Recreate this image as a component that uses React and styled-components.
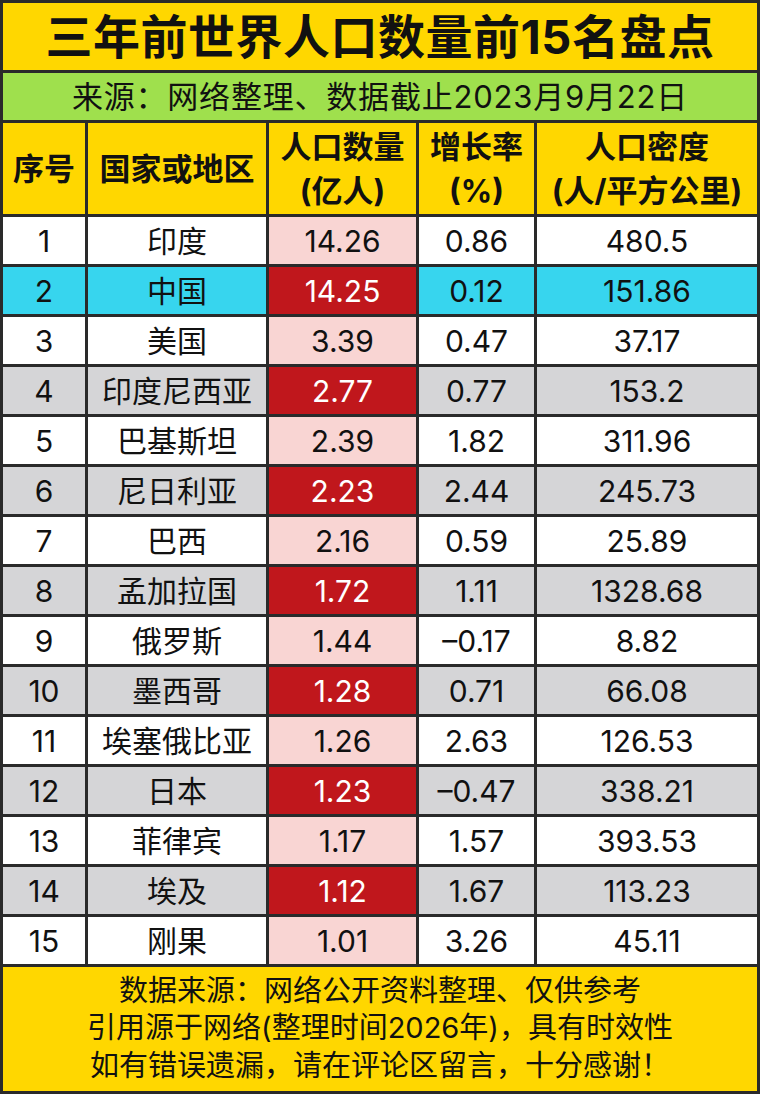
import React from "react";
import styled, { createGlobalStyle } from "styled-components";

const GlobalStyle = createGlobalStyle`
  html, body {
    margin: 0;
    padding: 0;
    background: #ffffff;
  }
  body {
    font-family: "Inter", "Noto Sans CJK SC", sans-serif;
  }
`;

const colors = {
  line: "#2a2a2a",
  yellow: "#ffd700",
  green: "#9fe04d",
  cyan: "#37d5ee",
  pink: "#f9d5d3",
  red: "#c0171c",
  grey: "#d5d5d7",
  white: "#ffffff",
};

const Sheet = styled.div`
  display: grid;
  grid-template-columns: 82px 178px 147px 115px 220px;
  grid-template-rows: 67px 47px 91px repeat(15, 47px) 124px;
  gap: 3px;
  padding: 3px;
  width: 760px;
  height: 1094px;
  box-sizing: border-box;
  background: ${colors.line};
`;

const Banner = styled.div`
  grid-column: 1 / -1;
  display: flex;
  align-items: center;
  justify-content: center;
  background: ${(p) => p.$bg};
  color: #111;
`;

const Title = styled.h1`
  margin: 0;
  font-family: "Inter", "Noto Sans CJK SC", sans-serif;
  font-size: 47px;
  font-weight: 700;
  letter-spacing: 0.5px;
  line-height: 1;
`;

const Subtitle = styled.div`
  font-size: 31px;
  line-height: 1;
  font-weight: 400;
  letter-spacing: 0.8px;
`;

const HeadCell = styled.div`
  background: ${colors.yellow};
  display: flex;
  flex-direction: column;
  align-items: center;
  justify-content: center;
  font-size: 31px;
  font-weight: 700;
  line-height: 44px;
  color: #111;
  white-space: nowrap;
`;

const toneBg = {
  white: colors.white,
  grey: colors.grey,
  cyan: colors.cyan,
  pink: colors.pink,
  red: colors.red,
};

const Cell = styled.div`
  background: ${(p) => toneBg[p.$tone]};
  color: ${(p) => (p.$tone === "red" ? "#ffffff" : "#111")};
  display: flex;
  align-items: center;
  justify-content: center;
  font-size: 30px;
  line-height: 1;
  white-space: nowrap;
`;

const Footer = styled(Banner)`
  flex-direction: column;
  font-size: 29px;
  line-height: 37.5px;
  padding-bottom: 2px;
`;

const rows = [
  [1, "印度", "14.26", "0.86", "480.5"],
  [2, "中国", "14.25", "0.12", "151.86"],
  [3, "美国", "3.39", "0.47", "37.17"],
  [4, "印度尼西亚", "2.77", "0.77", "153.2"],
  [5, "巴基斯坦", "2.39", "1.82", "311.96"],
  [6, "尼日利亚", "2.23", "2.44", "245.73"],
  [7, "巴西", "2.16", "0.59", "25.89"],
  [8, "孟加拉国", "1.72", "1.11", "1328.68"],
  [9, "俄罗斯", "1.44", "–0.17", "8.82"],
  [10, "墨西哥", "1.28", "0.71", "66.08"],
  [11, "埃塞俄比亚", "1.26", "2.63", "126.53"],
  [12, "日本", "1.23", "–0.47", "338.21"],
  [13, "菲律宾", "1.17", "1.57", "393.53"],
  [14, "埃及", "1.12", "1.67", "113.23"],
  [15, "刚果", "1.01", "3.26", "45.11"],
];

const rowTone = (rank) => {
  if (rank === 2) return "cyan";
  return rank % 2 === 0 ? "grey" : "white";
};

export default function App() {
  return (
    <>
      <GlobalStyle />
      <Sheet>
        <Banner $bg={colors.yellow}>
          <Title>三年前世界人口数量前15名盘点</Title>
        </Banner>
        <Banner $bg={colors.green}>
          <Subtitle>来源：网络整理、数据截止2023月9月22日</Subtitle>
        </Banner>

        <HeadCell>序号</HeadCell>
        <HeadCell>国家或地区</HeadCell>
        <HeadCell>
          <span>人口数量</span>
          <span>(亿人)</span>
        </HeadCell>
        <HeadCell>
          <span>增长率</span>
          <span>(%)</span>
        </HeadCell>
        <HeadCell>
          <span>人口密度</span>
          <span>(人/平方公里)</span>
        </HeadCell>

        {rows.map(([rank, name, pop, growth, density]) => {
          const tone = rowTone(rank);
          const popTone = rank % 2 === 0 ? "red" : "pink";
          return (
            <React.Fragment key={rank}>
              <Cell $tone={tone}>{rank}</Cell>
              <Cell $tone={tone}>{name}</Cell>
              <Cell $tone={popTone}>{pop}</Cell>
              <Cell $tone={tone}>{growth}</Cell>
              <Cell $tone={tone}>{density}</Cell>
            </React.Fragment>
          );
        })}

        <Footer $bg={colors.yellow}>
          <span>数据来源：网络公开资料整理、仅供参考</span>
          <span>引用源于网络(整理时间2026年)，具有时效性</span>
          <span>如有错误遗漏，请在评论区留言，十分感谢！</span>
        </Footer>
      </Sheet>
    </>
  );
}
